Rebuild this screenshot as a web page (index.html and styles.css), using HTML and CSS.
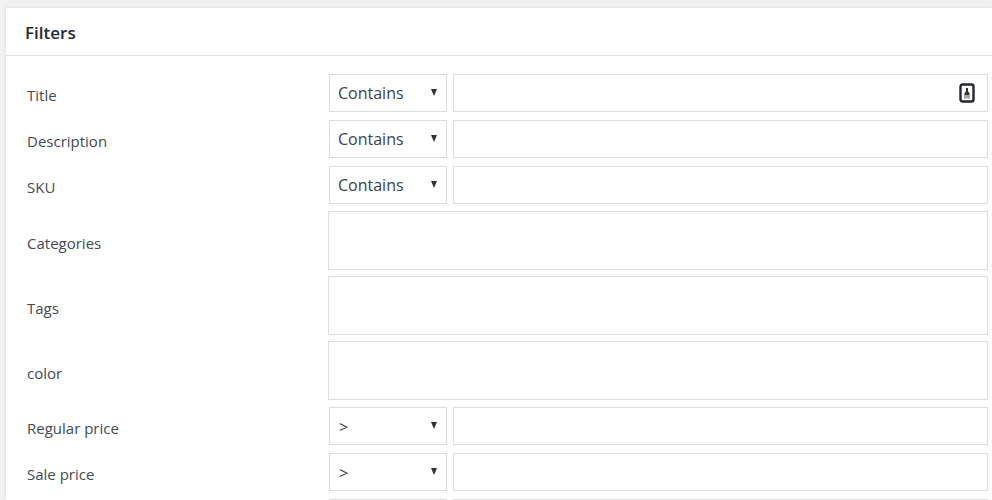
FILE: index.html
```html
<!DOCTYPE html>
<html lang="en">
<head>
<meta charset="utf-8">
<title>Filters</title>
<link rel="stylesheet" href="styles.css">
</head>
<body>
<section class="panel">
  <h2 class="panel-title">Filters</h2>
  <div class="rows">
    <div class="row"><span class="label">Title</span><div class="select"><span>Contains</span><i class="caret"></i></div><div class="input">
      <svg class="key" viewBox="0 0 16 20" width="16" height="20"><rect x="1.500" y="1.500" width="13" height="17" rx="2" fill="#fff" stroke="#26262e" stroke-width="2.400"/><path d="M7 5h2v3.500l1.500 1.500v2h-5v-2L7 8.500z" fill="#333"/><rect x="5" y="12" width="6" height="3.500" fill="#a8a8a8"/></svg>
    </div></div>
    <div class="row"><span class="label">Description</span><div class="select"><span>Contains</span><i class="caret"></i></div><div class="input"></div></div>
    <div class="row"><span class="label">SKU</span><div class="select"><span>Contains</span><i class="caret"></i></div><div class="input"></div></div>
    <div class="row tall"><span class="label">Categories</span><div class="area"></div></div>
    <div class="row tall"><span class="label">Tags</span><div class="area"></div></div>
    <div class="row tall"><span class="label">color</span><div class="area"></div></div>
    <div class="row"><span class="label">Regular price</span><div class="select symbol"><span>&gt;</span><i class="caret"></i></div><div class="input"></div></div>
    <div class="row"><span class="label">Sale price</span><div class="select symbol"><span>&gt;</span><i class="caret"></i></div><div class="input"></div></div>
    <div class="row stub"><span class="label"></span><div class="select"></div><div class="input"></div></div>
  </div>
</section>
</body>
</html>
```
FILE: styles.css
```css
html, body {
  margin: 0;
  height: 500px;
  overflow: hidden;
  background: #f1f1f1;
}
body {
  padding: 8px 0 0 6px;
  box-sizing: border-box;
  font-family: "Open Sans", "Noto Sans", sans-serif;
  color: #444b52;
}
.panel {
  background: #fff;
  box-shadow: 0 0 3px rgba(0, 0, 0, 0.12);
}
.panel-title {
  margin: 0;
  padding: 1px 0 0 19px;
  box-sizing: border-box;
  height: 48px;
  border-bottom: 1px solid #e2e4e7;
  font-size: 17px;
  font-weight: 600;
  line-height: 47px;
  color: #23282d;
}
.rows {
  display: flex;
  flex-direction: column;
  padding-top: 18px;
}
.row {
  display: flex;
  align-items: center;
  height: 38px;
  margin-bottom: 8px;
}
.row.tall {
  height: 59px;
  margin-top: -1px;
  margin-bottom: 7px;
}
.row.stub {
  height: 1px;
  margin-bottom: 0;
}
.label {
  width: 323px;
  flex: none;
  padding-left: 21px;
  box-sizing: border-box;
  font-size: 15px;
  position: relative;
  top: 2px;
}
.row.tall .label {
  width: 322px;
}
.select {
  display: flex;
  align-items: center;
  justify-content: space-between;
  box-sizing: border-box;
  width: 118px;
  height: 38px;
  flex: none;
  margin-right: 6px;
  padding: 0 9px 0 8px;
  border: 1px solid #ddd;
  font-size: 16px;
  color: #3c434a;
}
.select.symbol {
  padding-top: 2px;
  padding-left: 9px;
}
.stub .select,
.stub .input {
  height: 1px;
  padding: 0;
  border-width: 1px 0 0;
}
.stub .select {
  border-width: 1px 1px 0;
}
.caret {
  width: 0;
  height: 0;
  border-left: 3.500px solid transparent;
  border-right: 3.500px solid transparent;
  border-top: 7px solid #333;
  position: relative;
  top: -1px;
}
.symbol .caret {
  top: -2px;
}
.input {
  display: flex;
  align-items: center;
  justify-content: flex-end;
  box-sizing: border-box;
  width: 535px;
  height: 38px;
  flex: none;
  padding-right: 12px;
  border: 1px solid #ddd;
  background: #fff;
}
.area {
  box-sizing: border-box;
  width: 660px;
  height: 59px;
  flex: none;
  border: 1px solid #ddd;
}
```
